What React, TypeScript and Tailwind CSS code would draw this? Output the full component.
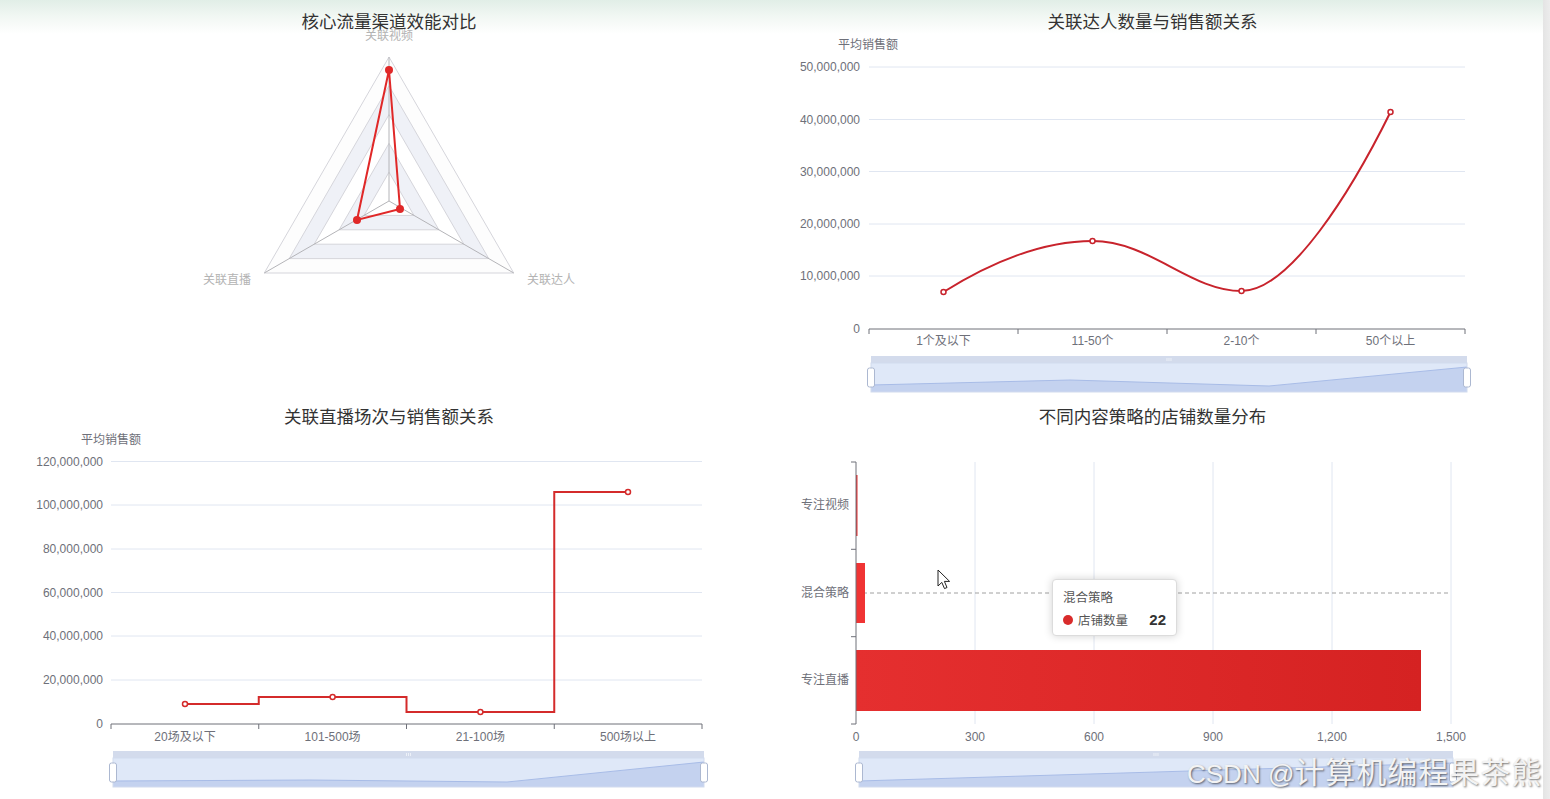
import React from "react";

const FONT = "'Liberation Sans','Noto Sans CJK SC',sans-serif";
const AXIS = "#6e7079";
const SPLIT = "#e0e6f1";

type Pt = [number, number];

function Slider({ x0, x1, y, area }: { x0: number; x1: number; y: number; area: Pt[] }) {
  const top = y + 7;
  const bottom = y + 36;
  const mid = (x0 + x1) / 2;
  const line = area.map(([px, py], i) => `${i ? "L" : "M"}${px},${py}`).join(" ");
  return (
    <g>
      <rect x={x0} y={y} width={x1 - x0} height={7} fill="#d3dbec" />
      <rect x={x0} y={top} width={x1 - x0} height={bottom - top} fill="#dfe8f8" />
      <path d={`${line} L${x1},${bottom} L${x0},${bottom} Z`} fill="#c4d2ef" />
      <path d={line} fill="none" stroke="#a8bce7" strokeWidth={1} />
      <rect x={x0} y={top} width={x1 - x0} height={bottom - top} fill="none" stroke="#d2dbee" />
      {[-2, 0, 2].map((d) => (
        <line key={d} x1={mid + d} x2={mid + d} y1={y + 2} y2={y + 5} stroke="#f4f6fb" strokeWidth={0.8} />
      ))}
      {[x0, x1].map((hx) => (
        <rect key={hx} x={hx - 3.5} y={top + 5} width={7} height={19} rx={2} fill="#ffffff" stroke="#acb8d1" />
      ))}
    </g>
  );
}

function Title({ text, side }: { text: string; side: "left" | "right" }) {
  return (
    <h2
      className={`h-[36px] pt-[9px] text-center text-[17.5px] leading-[24px] font-normal text-[#333333] ${
        side === "right" ? "pr-[8px]" : "pl-[8px]"
      }`}
    >
      {text}
    </h2>
  );
}

function Radar() {
  const cx = 389;
  const cy = 201;
  const R = 144;
  const angles = [-90, 30, 150].map((a) => (a * Math.PI) / 180);
  const poly = (r: number) =>
    angles.map((a) => `${cx + r * Math.cos(a)},${cy + r * Math.sin(a)}`).join(" ");
  const fills = ["#ffffff", "#eff1f7", "#ffffff", "#eff1f7", "#fdfdfd"];
  const pts: Pt[] = [
    [389, 70],
    [400, 209],
    [357, 220],
  ];
  return (
    <svg width={770} height={359} viewBox="0 36 770 359" className="overflow-visible" fontFamily={FONT} fontSize={12}>
      {[5, 4, 3, 2, 1].map((k) => (
        <polygon key={k} points={poly((R * k) / 5)} fill={fills[k - 1]} stroke="#d5d5db" strokeWidth={1} />
      ))}
      {angles.map((a, i) => (
        <line key={i} x1={cx} y1={cy} x2={cx + R * Math.cos(a)} y2={cy + R * Math.sin(a)} stroke="#b4b4b8" strokeWidth={1} />
      ))}
      <polygon points={pts.map((p) => p.join(",")).join(" ")} fill="none" stroke="#e02828" strokeWidth={2} />
      {pts.map(([x, y]) => (
        <circle key={x} cx={x} cy={y} r={4} fill="#e02828" />
      ))}
      <text x={389} y={40} textAnchor="middle" fill="#b3b3b3">关联视频</text>
      <text x={251} y={284} textAnchor="end" fill="#b3b3b3">关联直播</text>
      <text x={527} y={284} fill="#b3b3b3">关联达人</text>
    </svg>
  );
}

function TalentChart() {
  const ys: [string, number][] = [
    ["50,000,000", 67],
    ["40,000,000", 119.5],
    ["30,000,000", 171.5],
    ["20,000,000", 224],
    ["10,000,000", 276],
  ];
  const ticks = [869, 1018, 1167, 1316, 1465];
  const cats = ["1个及以下", "11-50个", "2-10个", "50个以上"];
  const pts: Pt[] = [
    [943.5, 292],
    [1092.5, 241],
    [1241.5, 291],
    [1390.5, 112],
  ];
  return (
    <svg width={773} height={359} viewBox="770 36 773 359" className="overflow-visible" fontFamily={FONT} fontSize={12}>
      <text x={868} y={49} textAnchor="middle" fill={AXIS}>平均销售额</text>
      {ys.map(([t, y]) => (
        <g key={t}>
          <line x1={869} x2={1465} y1={y} y2={y} stroke={SPLIT} />
          <text x={860} y={y + 4} textAnchor="end" fill={AXIS}>{t}</text>
        </g>
      ))}
      <text x={860} y={332.5} textAnchor="end" fill={AXIS}>0</text>
      <line x1={869} x2={1465} y1={329} y2={329} stroke={AXIS} />
      {ticks.map((x) => (
        <line key={x} x1={x} x2={x} y1={329} y2={334} stroke={AXIS} />
      ))}
      {cats.map((c, i) => (
        <text key={c} x={pts[i][0]} y={345} textAnchor="middle" fill={AXIS}>{c}</text>
      ))}
      <path
        d="M943.5,292 C990,263 1040,241 1092.5,241 C1150,241 1190,291 1241.5,291 C1290,291 1352,190 1390.5,112"
        fill="none"
        stroke="#c8232c"
        strokeWidth={2}
      />
      {pts.map(([x, y]) => (
        <circle key={x} cx={x} cy={y} r={2.5} fill="#ffffff" stroke="#c8232c" strokeWidth={1.5} />
      ))}
      <Slider
        x0={871}
        x1={1467}
        y={356}
        area={[
          [871, 385],
          [1070, 380],
          [1269, 386],
          [1467, 367],
        ]}
      />
    </svg>
  );
}

function LiveChart() {
  const ys: [string, number][] = [
    ["120,000,000", 461.5],
    ["100,000,000", 505],
    ["80,000,000", 549],
    ["60,000,000", 592.5],
    ["40,000,000", 636],
    ["20,000,000", 680],
  ];
  const ticks = [111, 258.75, 406.5, 554.25, 702];
  const cats = ["20场及以下", "101-500场", "21-100场", "500场以上"];
  const pts: Pt[] = [
    [185, 704],
    [332.6, 697],
    [480.4, 712],
    [628, 492],
  ];
  return (
    <svg width={770} height={368} viewBox="0 431 770 368" className="overflow-visible" fontFamily={FONT} fontSize={12}>
      <text x={111} y={444} textAnchor="middle" fill={AXIS}>平均销售额</text>
      {ys.map(([t, y]) => (
        <g key={t}>
          <line x1={111} x2={702} y1={y} y2={y} stroke={SPLIT} />
          <text x={103} y={y + 4} textAnchor="end" fill={AXIS}>{t}</text>
        </g>
      ))}
      <text x={103} y={727.5} textAnchor="end" fill={AXIS}>0</text>
      <line x1={111} x2={702} y1={724} y2={724} stroke={AXIS} />
      {ticks.map((x) => (
        <line key={x} x1={x} x2={x} y1={724} y2={729} stroke={AXIS} />
      ))}
      {cats.map((c, i) => (
        <text key={c} x={pts[i][0]} y={741} textAnchor="middle" fill={AXIS}>{c}</text>
      ))}
      <path
        d="M185,704 H258.75 V697 H406.5 V712 H554.25 V492 H628"
        fill="none"
        stroke="#d42b2b"
        strokeWidth={2}
      />
      {pts.map(([x, y]) => (
        <circle key={x} cx={x} cy={y} r={2.5} fill="#ffffff" stroke="#d42b2b" strokeWidth={1.5} />
      ))}
      <Slider
        x0={113}
        x1={704}
        y={751}
        area={[
          [113, 781],
          [310, 780],
          [507, 782],
          [704, 762],
        ]}
      />
    </svg>
  );
}

function StrategyChart() {
  const grid = [975, 1094, 1213, 1332, 1451];
  const xl: [string, number][] = [
    ["0", 856],
    ["300", 975],
    ["600", 1094],
    ["900", 1213],
    ["1,200", 1332],
    ["1,500", 1451],
  ];
  const cats: [string, number][] = [
    ["专注视频", 505],
    ["混合策略", 593],
    ["专注直播", 680],
  ];
  return (
    <svg width={773} height={368} viewBox="770 431 773 368" className="overflow-visible" fontFamily={FONT} fontSize={12}>
      <defs>
        <linearGradient id="barGrad" x1="0" x2="1" y1="0" y2="0">
          <stop offset="0%" stopColor="#e52f2f" />
          <stop offset="100%" stopColor="#d52222" />
        </linearGradient>
      </defs>
      {grid.map((x) => (
        <line key={x} x1={x} x2={x} y1={462} y2={724} stroke={SPLIT} />
      ))}
      <line x1={856} x2={1451} y1={593} y2={593} stroke="#a0a0a0" strokeDasharray="4 3" />
      <rect x={856} y={475} width={1.5} height={61} fill="#e52f2f" />
      <rect x={856} y={563} width={9} height={60} fill="#f03434" />
      <rect x={856} y={650} width={565} height={61} fill="url(#barGrad)" />
      <line x1={856} x2={856} y1={462} y2={724} stroke={AXIS} />
      {[462, 549.3, 636.7, 724].map((y) => (
        <line key={y} x1={851} x2={856} y1={y} y2={y} stroke={AXIS} />
      ))}
      {cats.map(([c, y]) => (
        <text key={c} x={849} y={y + 4} textAnchor="end" fill={AXIS}>{c}</text>
      ))}
      {xl.map(([t, x]) => (
        <text key={t} x={x} y={741} textAnchor="middle" fill={AXIS}>{t}</text>
      ))}
      <path
        d="M938,570 L938,586 L941.8,582.4 L944.5,588.6 L947,587.5 L944.4,581.4 L949.6,581.4 Z"
        fill="#ffffff"
        stroke="#222222"
        strokeWidth={1}
        strokeLinejoin="round"
      />
      <Slider
        x0={859}
        x1={1453}
        y={751}
        area={[
          [859, 781],
          [1156, 772],
          [1453, 763],
        ]}
      />
    </svg>
  );
}

export default function App() {
  return (
    <div className="relative flex h-[799px] w-[1550px] overflow-hidden bg-white font-['Noto_Sans_CJK_SC','Liberation_Sans',sans-serif]">
      <main className="grid w-[1543px] grid-cols-[770px_773px] grid-rows-[395px_404px] bg-[linear-gradient(to_bottom,#e1eee7_0px,#f1f7f3_16px,#ffffff_34px)]">
        <section className="flex flex-col">
          <Title text="核心流量渠道效能对比" side="left" />
          <Radar />
        </section>
        <section className="flex flex-col">
          <Title text="关联达人数量与销售额关系" side="right" />
          <TalentChart />
        </section>
        <section className="flex flex-col">
          <Title text="关联直播场次与销售额关系" side="left" />
          <LiveChart />
        </section>
        <section className="relative flex flex-col">
          <Title text="不同内容策略的店铺数量分布" side="right" />
          <StrategyChart />
          <div className="absolute left-[282px] top-[184px] flex h-[57px] w-[125px] flex-col rounded-[4px] border border-[#dcdcdc] bg-white px-[10px] pt-[7px] shadow-[0_0_8px_rgba(0,0,0,0.18)]">
            <div className="text-[12.5px] leading-[20px] text-[#555555]">混合策略</div>
            <div className="mt-[3px] flex items-center text-[12.5px] leading-[20px] text-[#555555]">
              <span className="mr-[5px] h-[10px] w-[10px] rounded-full bg-[#d92b2b]" />
              <span>店铺数量</span>
              <span className="ml-auto font-['Liberation_Sans',sans-serif] text-[15px] font-bold text-[#333333]">22</span>
            </div>
          </div>
        </section>
      </main>
      <div className="w-[7px] bg-[linear-gradient(to_right,#e4e4e4,#ececec)]" />
      <div className="absolute left-[1187px] top-[752px] flex items-baseline whitespace-nowrap text-[#f3f3f3] [text-shadow:1px_1px_2px_rgba(0,0,0,0.55)]">
        <span className="font-['Liberation_Sans',sans-serif] text-[26px] leading-[36px]">CSDN @</span>
        <span className="text-[30px] leading-[36px] tracking-[1px]">计算机编程果茶熊</span>
      </div>
    </div>
  );
}
